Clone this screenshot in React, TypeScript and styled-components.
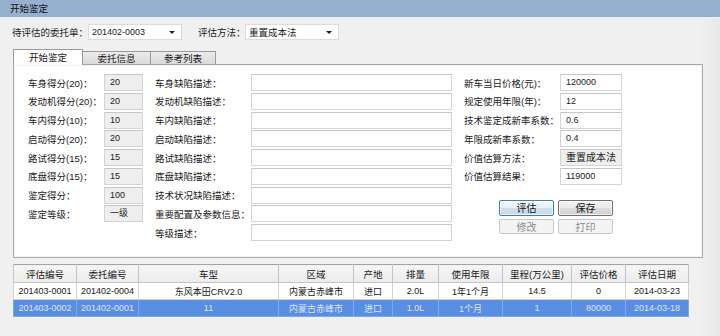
import React from 'react'
import styled, { createGlobalStyle } from 'styled-components'

const GlobalStyle = createGlobalStyle`
  html, body {
    margin: 0;
    padding: 0;
    background: #f0f0f0;
  }
  body {
    width: 720px;
    height: 336px;
    overflow: hidden;
    font-family: 'Liberation Sans', 'Noto Sans CJK SC', sans-serif;
    font-size: 9.5px;
    color: #1c1c1c;
  }
`

const leftRows = [
  { label: '车身得分(20)：', value: '20' },
  { label: '发动机得分(20)：', value: '20' },
  { label: '车内得分(10)：', value: '10' },
  { label: '启动得分(20)：', value: '20' },
  { label: '路试得分(15)：', value: '15' },
  { label: '底盘得分(15)：', value: '15' },
  { label: '鉴定得分：', value: '100' },
  { label: '鉴定等级：', value: '一级' },
]

const middleRows = [
  '车身缺陷描述：',
  '发动机缺陷描述：',
  '车内缺陷描述：',
  '启动缺陷描述：',
  '路试缺陷描述：',
  '底盘缺陷描述：',
  '技术状况缺陷描述：',
  '重要配置及参数信息：',
  '等级描述：',
]

const rightRows = [
  { label: '新车当日价格(元)：', value: '120000' },
  { label: '规定使用年限(年)：', value: '12' },
  { label: '技术鉴定成新率系数：', value: '0.6' },
  { label: '年限成新率系数：', value: '0.4' },
  { label: '价值估算方法：', value: '重置成本法', readonly: true },
  { label: '价值估算结果：', value: '119000' },
]

const columns = [
  { title: '评估编号', width: 63 },
  { title: '委托编号', width: 62 },
  { title: '车型', width: 140 },
  { title: '区域', width: 75 },
  { title: '产地', width: 39 },
  { title: '排量', width: 46 },
  { title: '使用年限', width: 64 },
  { title: '里程(万公里)', width: 69 },
  { title: '评估价格', width: 54 },
  { title: '评估日期', width: 63 },
]

const records = [
  ['201403-0001', '201402-0004', '东风本田CRV2.0', '内蒙古赤峰市', '进口', '2.0L', '1年1个月', '14.5', '0', '2014-03-23'],
  ['201403-0002', '201402-0001', '11', '内蒙古赤峰市', '进口', '1.0L', '1个月', '1', '80000', '2014-03-18'],
]

export default function App() {
  return (
    <Page>
      <GlobalStyle />
      <TitleBar>开始鉴定</TitleBar>
      <Content>
        <Toolbar>
          <ToolLabel $width={76}>待评估的委托单：</ToolLabel>
          <Select>
            <span>201402-0003</span>
            <Arrow />
          </Select>
          <ToolLabel $width={47} $offset={16}>评估方法：</ToolLabel>
          <Select>
            <SelectText>重置成本法</SelectText>
            <Arrow />
          </Select>
        </Toolbar>

        <Tabs>
          <Tab $active $width={70}>开始鉴定</Tab>
          <Tab $width={69}>委托信息</Tab>
          <Tab $width={66}>参考列表</Tab>
        </Tabs>

        <Panel>
          <FormGroup $label={76} $input={39}>
            {leftRows.map((r) => (
              <React.Fragment key={r.label}>
                <Label>{r.label}</Label>
                <Field $readonly>{r.value}</Field>
              </React.Fragment>
            ))}
          </FormGroup>

          <FormGroup $label={96} $input={201}>
            {middleRows.map((l) => (
              <React.Fragment key={l}>
                <Label>{l}</Label>
                <Field />
              </React.Fragment>
            ))}
          </FormGroup>

          <RightColumn>
            <FormGroup $label={96} $input={62}>
              {rightRows.map((r) => (
                <React.Fragment key={r.label}>
                  <Label>{r.label}</Label>
                  <Field $readonly={r.readonly} $cjk={r.readonly}>
                    {r.value}
                  </Field>
                </React.Fragment>
              ))}
            </FormGroup>
            <ButtonGrid>
              <Button $variant="default">评估</Button>
              <Button>保存</Button>
              <Button $variant="disabled">修改</Button>
              <Button $variant="disabled">打印</Button>
            </ButtonGrid>
          </RightColumn>
        </Panel>

        <Table>
          <colgroup>
            {columns.map((c) => (
              <col key={c.title} style={{ width: c.width }} />
            ))}
          </colgroup>
          <thead>
            <tr>
              {columns.map((c) => (
                <Th key={c.title}>{c.title}</Th>
              ))}
            </tr>
          </thead>
          <tbody>
            {records.map((row, i) => (
              <Tr key={row[0]} $selected={i === 1}>
                {row.map((cell, j) => (
                  <Td key={j}>{cell}</Td>
                ))}
              </Tr>
            ))}
          </tbody>
        </Table>
      </Content>
    </Page>
  )
}

const Page = styled.div`
  width: 720px;
  height: 336px;
  background: linear-gradient(90deg, #f0f0f0 0%, #f0f0f0 97%, #e9e9e9 100%);
`

const TitleBar = styled.div`
  height: 17px;
  line-height: 17px;
  padding-left: 10px;
  background: #97b0d0;
  border-bottom: 1px solid #e8edf3;
  color: #101010;
`

const Content = styled.div`
  padding: 0 0 0 13px;
`

const Toolbar = styled.div`
  display: flex;
  align-items: center;
  height: 16px;
  margin-top: 6px;
`

const ToolLabel = styled.span<{ $width: number; $offset?: number }>`
  width: ${({ $width }) => $width}px;
  margin-left: ${({ $offset }) => $offset ?? -1}px;
  white-space: nowrap;
`

const Select = styled.div`
  position: relative;
  display: flex;
  align-items: center;
  box-sizing: border-box;
  width: 94px;
  height: 16px;
  padding-left: 3px;
  background: #ffffff;
  border: 1px solid #dcdcdc;
  font-size: 9px;
`

const SelectText = styled.span`
  font-size: 9.5px;
`

const Arrow = styled.span`
  position: absolute;
  right: 6px;
  top: 6px;
  width: 0;
  height: 0;
  border-left: 3px solid transparent;
  border-right: 3px solid transparent;
  border-top: 3px solid #222;
`

const Tabs = styled.div`
  display: flex;
  align-items: flex-end;
  height: 15px;
  margin-top: 10px;
  margin-bottom: -1px;
  position: relative;
  z-index: 1;
`

const Tab = styled.div<{ $active?: boolean; $width: number }>`
  box-sizing: border-box;
  width: ${({ $width }) => $width}px;
  height: ${({ $active }) => ($active ? 16 : 14)}px;
  line-height: ${({ $active }) => ($active ? 15 : 13)}px;
  text-align: center;
  border: 1px solid #9a9a9a;
  border-bottom: ${({ $active }) => ($active ? 'none' : '1px solid #a9a9a9')};
  margin-left: ${({ $active }) => ($active ? 0 : -1)}px;
  background: ${({ $active }) =>
    $active ? '#ffffff' : 'linear-gradient(#ececec, #d9d9d9)'};
  color: #1a1a1a;
`

const Panel = styled.div`
  box-sizing: border-box;
  display: flex;
  align-items: flex-start;
  gap: 12px;
  width: 690px;
  height: 194px;
  padding: 9px 0 0 14px;
  background: #ffffff;
  border: 1px solid #a9a9a9;
  box-shadow: inset 0 0 0 1px #f1f1f1;
`

const FormGroup = styled.div<{ $label: number; $input: number }>`
  display: grid;
  grid-template-columns: ${({ $label, $input }) => `${$label}px ${$input}px`};
  grid-auto-rows: 17px;
  row-gap: 1.75px;
  align-items: center;
`

const Label = styled.span`
  white-space: nowrap;
  color: #1a1a1a;
`

const Field = styled.div<{ $readonly?: boolean; $cjk?: boolean }>`
  box-sizing: border-box;
  height: 17px;
  line-height: 15px;
  padding-left: 5px;
  font-size: ${({ $cjk }) => ($cjk ? '10px' : '9px')};
  background: ${({ $readonly }) => ($readonly ? '#eeeeee' : '#ffffff')};
  border: 1px solid #d4d4d4;
  border-top-color: #c6c6c6;
`

const RightColumn = styled.div`
  display: flex;
  flex-direction: column;
`

const ButtonGrid = styled.div`
  display: grid;
  grid-template-columns: 55px 55px;
  grid-template-rows: 16px 15px;
  gap: 3px 4px;
  margin: 15px 0 0 35px;
`

const Button = styled.div<{ $variant?: 'default' | 'disabled' }>`
  box-sizing: border-box;
  display: flex;
  align-items: center;
  justify-content: center;
  font-size: 10px;
  border-radius: 2px;
  border: 1px solid
    ${({ $variant }) =>
      $variant === 'default' ? '#3c7fb1' : $variant === 'disabled' ? '#c4c7c9' : '#707070'};
  background: ${({ $variant }) =>
    $variant === 'disabled'
      ? '#f4f4f4'
      : $variant === 'default'
        ? 'linear-gradient(#f4f9fc 0%, #e4eef5 50%, #cfdfea 51%, #c8dbe8 100%)'
        : 'linear-gradient(#f2f2f2 0%, #ebebeb 50%, #dddddd 51%, #cfcfcf 100%)'};
  color: ${({ $variant }) => ($variant === 'disabled' ? '#8a8a8a' : '#111')};
  box-shadow: ${({ $variant }) =>
    $variant === 'disabled' ? 'none' : 'inset 0 0 0 1px rgba(255,255,255,0.7)'};
`

const Table = styled.table`
  width: 675px;
  margin-top: 6px;
  border-collapse: collapse;
  table-layout: fixed;
  border: 1px solid #a4a4a4;
  background: #ffffff;
`

const Th = styled.th`
  height: 17px;
  padding: 0;
  font-weight: normal;
  text-align: center;
  background: linear-gradient(#f6f6f6, #ececec);
  border: 1px solid #c4c4c4;
  border-top: none;
  color: #1a1a1a;
  white-space: nowrap;
`

const Tr = styled.tr<{ $selected?: boolean }>`
  height: 17px;
  background: ${({ $selected }) => ($selected ? '#5a8ee2' : '#ffffff')};
  color: ${({ $selected }) => ($selected ? '#dbe5f5' : '#1a1a1a')};

  td {
    border-color: ${({ $selected }) => ($selected ? '#7fa8e8' : '#d2d2d2')};
  }
`

const Td = styled.td`
  padding: 0;
  text-align: center;
  font-size: 9px;
  border: 1px solid #d2d2d2;
  white-space: nowrap;
  overflow: hidden;
`
